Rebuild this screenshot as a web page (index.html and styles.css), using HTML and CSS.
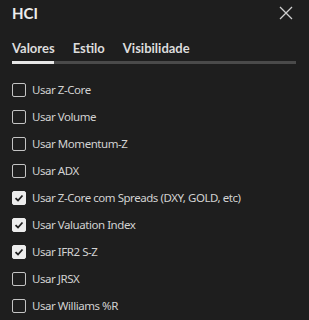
FILE: index.html
```html
<!DOCTYPE html>
<html>
<head>
<meta charset="utf-8">
<link rel="stylesheet" href="styles.css">
</head>
<body>
<div class="dialog">
  <div class="header">
    <span class="title">HCI</span>
    <svg class="close" width="14" height="14" viewBox="0 0 14 14"><path d="M1 1 L13 13 M13 1 L1 13" stroke="#cfcfcf" stroke-width="1.3" fill="none"/></svg>
  </div>
  <div class="tabs">
    <span class="tab active">Valores</span>
    <span class="tab">Estilo</span>
    <span class="tab">Visibilidade</span>
  </div>
  <div class="track"><div class="thumb"></div></div>
  <ul class="list">
    <li><span class="box"></span>Usar Z-Core</li>
    <li><span class="box"></span>Usar Volume</li>
    <li><span class="box"></span>Usar Momentum-Z</li>
    <li><span class="box"></span>Usar ADX</li>
    <li><span class="box on"><svg width="10" height="10" viewBox="0 0 10 10"><path d="M1.5 5.2 L4 7.5 L8.5 2.5" stroke="#1e1e1e" stroke-width="1.8" fill="none"/></svg></span>Usar Z-Core com Spreads (DXY, GOLD, etc)</li>
    <li><span class="box on"><svg width="10" height="10" viewBox="0 0 10 10"><path d="M1.5 5.2 L4 7.5 L8.5 2.5" stroke="#1e1e1e" stroke-width="1.8" fill="none"/></svg></span>Usar Valuation Index</li>
    <li><span class="box on"><svg width="10" height="10" viewBox="0 0 10 10"><path d="M1.5 5.2 L4 7.5 L8.5 2.5" stroke="#1e1e1e" stroke-width="1.8" fill="none"/></svg></span>Usar IFR2 S-Z</li>
    <li><span class="box"></span>Usar JRSX</li>
    <li><span class="box"></span>Usar Williams %R</li>
  </ul>
</div>
</body>
</html>
```
FILE: styles.css
```css
html, body {
  margin: 0;
  padding: 0;
  background: #1e1e1e;
}
.dialog {
  width: 309px;
  height: 320px;
  box-sizing: border-box;
  font-family: Lato, "Noto Sans", sans-serif;
  color: #d6d6d6;
  overflow: hidden;
}
.header {
  display: flex;
  justify-content: space-between;
  align-items: center;
  padding: 1px 16px 0 12px;
  height: 23px;
}
.title {
  font-size: 15px;
  font-weight: 700;
  color: #ededed;
}
.close {
  display: block;
}
.tabs {
  display: flex;
  gap: 18px;
  padding: 14px 0 0 12px;
  height: 23px;
}
.tab {
  font-size: 13px;
  font-weight: 700;
  color: #dcdcdc;
  line-height: 20px;
}
.track {
  margin: 0 12px 0 12px;
  width: 284px;
  height: 3px;
  background: #4a4a4a;
}
.thumb {
  width: 42px;
  height: 3px;
  background: #e6e6e6;
}
.list {
  list-style: none;
  margin: 0;
  padding: 12px 0 0 12px;
}
.list li {
  display: flex;
  align-items: center;
  height: 27px;
  font-family: "Noto Sans", sans-serif;
  font-size: 11.5px;
  letter-spacing: -0.45px;
  color: #d2d2d2;
}
.box {
  width: 14px;
  height: 14px;
  box-sizing: border-box;
  border: 1px solid #c4c4c4;
  border-radius: 2px;
  margin-right: 6px;
  display: flex;
  align-items: center;
  justify-content: center;
  flex: none;
}
.box.on {
  background: #ececec;
  border-color: #ececec;
}
```
